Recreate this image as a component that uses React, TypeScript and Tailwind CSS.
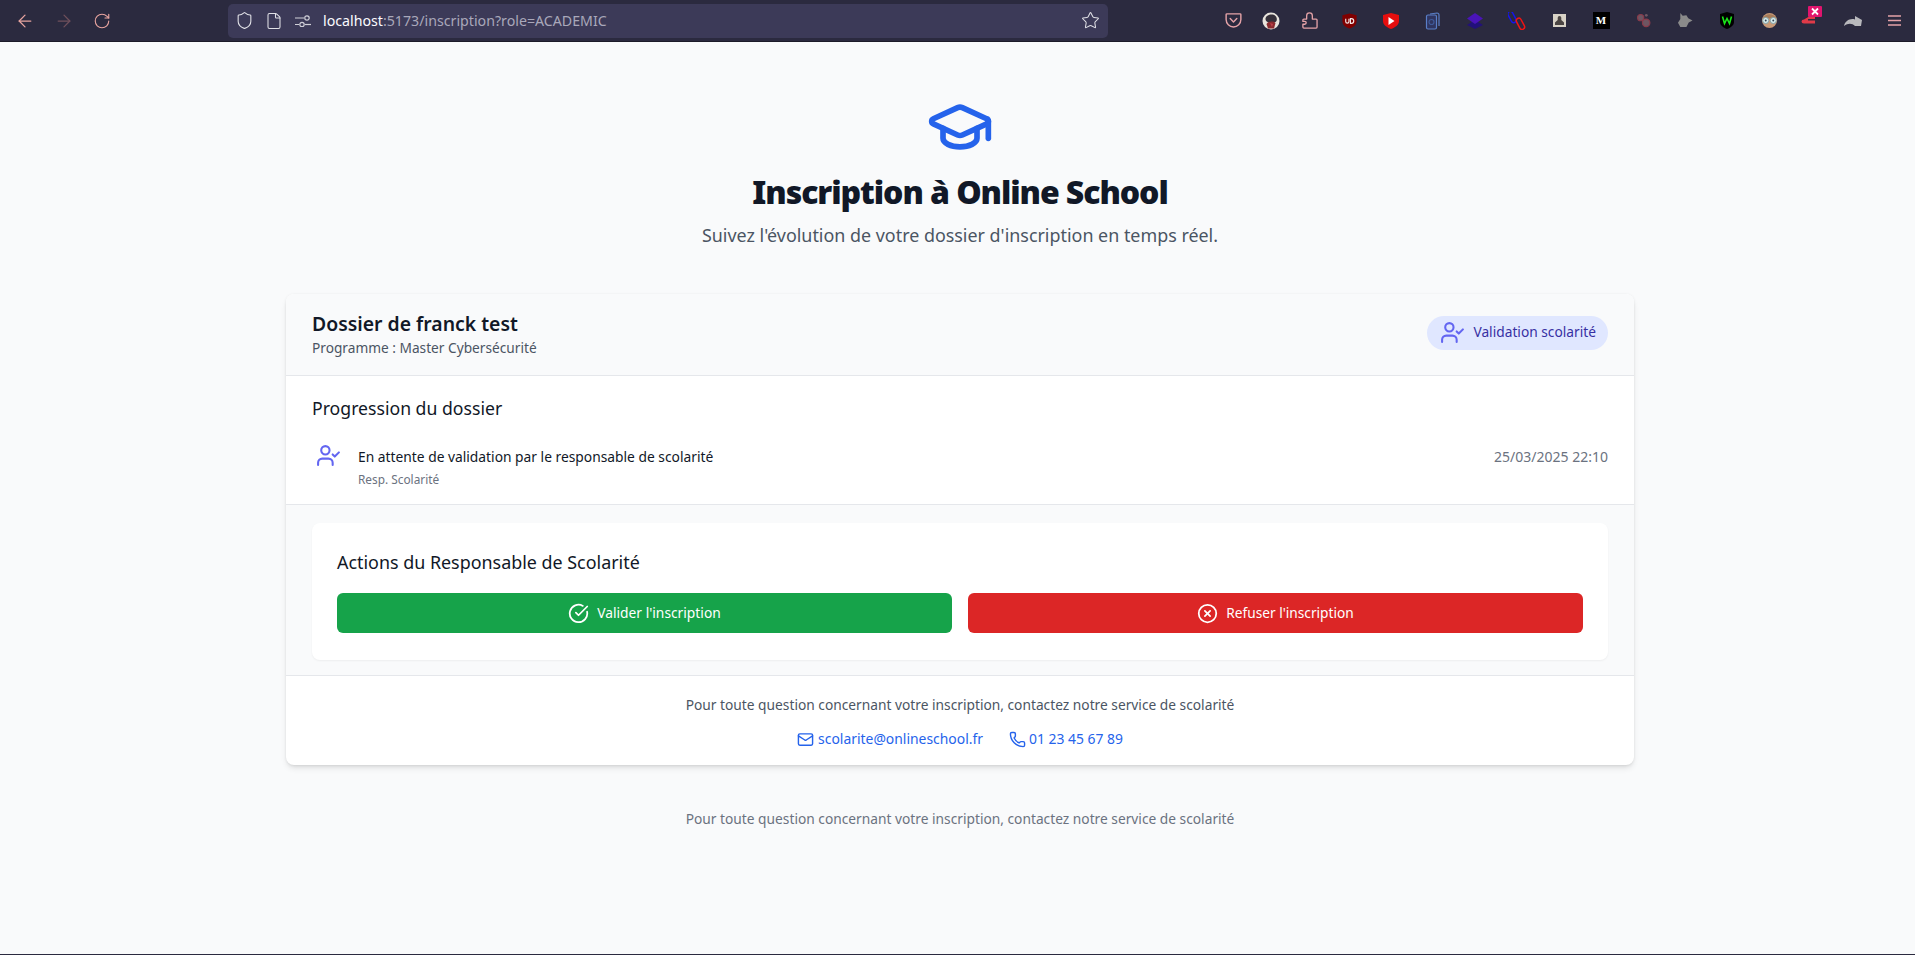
import React from "react";
import { ArrowLeft, ArrowRight, RotateCw, Shield, File, Star, GraduationCap, UserCheck, CircleCheckBig, CircleX, Mail, Phone } from "lucide-react";

const Slot = ({ children }: { children: React.ReactNode }) => (
  <div className="w-[42px] h-full flex items-center justify-center shrink-0">{children}</div>
);
const NarrowSlot = ({ children }: { children: React.ReactNode }) => (
  <div className="w-[38px] h-full flex items-center justify-center shrink-0">{children}</div>
);

const Extensions = () => (
  <div className="flex items-center h-full">
    <NarrowSlot>
      <svg width="17" height="17" viewBox="0 0 18 18" fill="none" stroke="#e5a3a8" strokeWidth="1.5" strokeLinecap="round" strokeLinejoin="round">
        <path d="M2 2h14a.8.8 0 0 1 .8.8V8a7.8 7.8 0 0 1-15.600 0V2.800A.8.8 0 0 1 2 2z" />
        <path d="M5.500 7l3.500 3.500L12.500 7" />
      </svg>
    </NarrowSlot>
    <NarrowSlot>
      <svg width="18" height="18" viewBox="0 0 18 18">
        <circle cx="9" cy="9" r="8.500" fill="#e8e4dc" />
        <path d="M3.500 7c0-4 7-6 10-3 2 2 1.500 5 0 6-2 1-7 1-8 0-1-.5-2-1.500-2-3z" fill="#35303a" />
        <path d="M4.500 12c2-3 7-3 9-1l-1.500 5.500-6 0z" fill="#8a2a2e" />
        <path d="M8 11l3 1-1 3z" fill="#c0404a" />
      </svg>
    </NarrowSlot>
    <NarrowSlot>
      <svg width="17" height="17" viewBox="0 0 18 18" fill="none" stroke="#e5a3a8" strokeWidth="1.400" strokeLinejoin="round">
        <path d="M6 7.500V4a3 3 0 0 1 6 0v3.500h4a1 1 0 0 1 1 1V16a1 1 0 0 1-1 1H3a1 1 0 0 1-1-1v-3h2a1.500 1.500 0 0 0 0-3H2V8.500a1 1 0 0 1 1-1z" />
      </svg>
    </NarrowSlot>
    <Slot>
      <svg width="17" height="18" viewBox="0 0 18 18">
        <path d="M9 1l7.500 2v6c0 4-3 6.500-7.500 8-4.500-1.500-7.500-4-7.500-8V3z" fill="#800000" />
        <path d="M5 6.500v3a1.700 1.700 0 0 0 3.400 0v-3M10 6.500v5h1a2.500 2.500 0 0 0 0-5z" fill="none" stroke="#f2e6e6" strokeWidth="1.200" />
      </svg>
    </Slot>
    <Slot>
      <svg width="18" height="18" viewBox="0 0 18 18">
        <path d="M9 1l8 2v6c0 4-4 6.500-8 8-4-1.500-8-4-8-8V3z" fill="#e50e0e" />
        <path d="M6.500 5l6 4-6 4z" fill="#fff" />
      </svg>
    </Slot>
    <Slot>
      <svg width="16" height="18" viewBox="0 0 16 18" fill="none" stroke="#5a7fc8" strokeWidth="1.200">
        <path d="M5 2l7-1a2 2 0 0 1 2 2v11" />
        <rect x="1.500" y="3" width="10" height="14" rx="1.500" fill="#2f3560" />
        <circle cx="6.500" cy="10" r="2.500" stroke="#3f5a99" />
      </svg>
    </Slot>
    <Slot>
      <svg width="18" height="16" viewBox="0 0 18 16">
        <path d="M9 7l8 5-8 4-8-4z" fill="#22107a" />
        <path d="M9 0l8 5.500-8 5.500-8-5.500z" fill="#4a14b8" />
      </svg>
    </Slot>
    <Slot>
      <svg width="18" height="18" viewBox="0 0 18 18" fill="none" strokeWidth="1.500">
        <rect x="1.500" y="-1" width="5" height="12" rx="2.500" transform="rotate(-28 4 5)" stroke="#1414f0" />
        <rect x="10" y="6" width="5" height="12" rx="2.500" transform="rotate(-28 12 12)" stroke="#f01414" />
      </svg>
    </Slot>
    <Slot>
      <svg width="13" height="13" viewBox="0 0 13 13">
        <rect width="13" height="13" fill="#d8d2c6" />
        <path d="M6.500 2a1.800 1.800 0 0 1 1.800 1.800V6l2.700 2.500V11H2V8.500L4.700 6V3.800A1.800 1.800 0 0 1 6.500 2z" fill="#4a4442" />
      </svg>
    </Slot>
    <Slot>
      <div className="w-[17px] h-[17px] bg-black text-white flex items-center justify-center text-[11px] font-bold [font-family:'Liberation_Serif',serif]">M</div>
    </Slot>
    <Slot>
      <svg width="17" height="17" viewBox="0 0 18 18" fill="#6e5562" stroke="#8a3a4a" strokeWidth="1.200">
        <circle cx="6" cy="6" r="3.300" />
        <circle cx="11.800" cy="11.500" r="4" />
        <circle cx="12" cy="3.500" r="1.500" stroke="none" />
      </svg>
    </Slot>
    <Slot>
      <svg width="16" height="15" viewBox="0 0 17 16">
        <path d="M3.500 0L6 3l4-.5 2 3 4.500 2.500-4 2L10 15H3.500L1 10.500 3.500 6.500z" fill="#8a8a8a" />
      </svg>
    </Slot>
    <Slot>
      <svg width="14" height="17" viewBox="0 0 14 17">
        <path d="M7 0l7 2v8c0 3-3 5.500-7 7-4-1.500-7-4-7-7V2z" fill="#000" />
        <path d="M2.500 4.500l2 7 2.500-5 2.500 5 2-7" fill="none" stroke="#19e619" strokeWidth="1.600" />
      </svg>
    </Slot>
    <Slot>
      <svg width="17" height="17" viewBox="0 0 18 18">
        <circle cx="9" cy="9" r="8" fill="#c89a78" />
        <path d="M2 7c2-6 12-6 14 0z" fill="#a57c5a" />
        <circle cx="5" cy="9" r="3.200" fill="#d8ecec" stroke="#7fa0a8" />
        <circle cx="13" cy="9" r="3.200" fill="#d8ecec" stroke="#7fa0a8" />
        <circle cx="5" cy="9" r="1" fill="#345" />
        <circle cx="13" cy="9" r="1" fill="#345" />
      </svg>
    </Slot>
    <Slot>
      <svg width="21" height="20" viewBox="0 0 21 20" className="-mt-[10px]">
        <path d="M3 13.500l6-3.500h5v3H7v1.500h7v3H3q-2.500 0-2.500-2t2.500-2z" fill="#e03a48" />
        <rect x="7" y="0" width="14" height="11" rx="1" fill="#e0146e" />
        <path d="M11 2.500l6 6M17 2.500l-6 6" stroke="#fff" strokeWidth="1.800" />
      </svg>
    </Slot>
    <Slot>
      <svg width="18" height="10" viewBox="0 0 18 10">
        <path d="M0 10C1 5 6 2 11 3.500V0l7 4-1 6H11C8 7 4 7 0 10z" fill="#b8b8bc" />
      </svg>
    </Slot>
    <div className="w-[41px] h-full flex items-center justify-center shrink-0">
      <svg width="13" height="11" viewBox="0 0 13 11" stroke="#e5a3a8" strokeWidth="1.500">
        <path d="M0 1h13M0 5.500h13M0 10h13" />
      </svg>
    </div>
  </div>
);

const Browser = () => (
  <div className="h-[42px] bg-[#2b2a3f] flex items-center shrink-0 border-b border-[#1c1b29]">
    <div className="w-[228px] flex items-center pl-[15px] gap-[19px] shrink-0">
      <ArrowLeft size={20} color="#e9a5a0" strokeWidth={1.500} />
      <ArrowRight size={20} color="#70505c" strokeWidth={1.500} />
      <RotateCw size={18} color="#e9a5a0" strokeWidth={1.500} />
    </div>
    <div className="w-[880px] h-[34px] bg-[#3c3a58] rounded-[5px] flex items-center pl-[7px] pr-[8px] shrink-0">
      <Shield size={19} color="#e0e0e6" strokeWidth={1.400} />
      <File size={18} color="#e0e0e6" strokeWidth={1.400} className="ml-[11px]" />
      <svg width="16" height="12" viewBox="0 0 16 12" fill="none" stroke="#d0d0d8" strokeWidth="1.200" className="ml-[12px]">
        <path d="M0 3h9M0 9.500h4" />
        <circle cx="12" cy="3" r="2.200" />
        <circle cx="7" cy="9.500" r="2.200" />
        <path d="M10 9.500h6" />
      </svg>
      <div className="ml-[12px] text-[14.2px] whitespace-nowrap text-[#a9a8ba] [font-family:'Noto_Sans',sans-serif]">
        <span className="text-[#fbfbfe]">localhost</span>:5173/inscription?role=ACADEMIC
      </div>
      <Star size={19} color="#e0e0e6" strokeWidth={1.300} className="ml-auto" />
    </div>
    <div className="ml-auto h-full"><Extensions /></div>
  </div>
);

export default function App() {
  return (
    <div className="h-[955px] w-[1915px] overflow-hidden flex flex-col bg-[#f9fafb] border-b border-[#2b2a3f] [font-family:'Noto_Sans',sans-serif] text-[#111827]">
      <Browser />
      <main className="w-[1348px] ml-[286px] pt-[51px]">
        <header className="flex flex-col items-center">
          <GraduationCap size={68} color="#2563eb" strokeWidth={2} />
          <h1 className="mt-[13px] text-[32px] leading-[36px] font-black tracking-[-1.07px] text-[#111827]">Inscription à Online School</h1>
          <p className="mt-[11px] text-[17.9px] leading-[28px] text-[#4b5563]">Suivez l'évolution de votre dossier d'inscription en temps réel.</p>
        </header>

        <section className="mt-[45px] bg-white rounded-lg shadow-[0_4px_6px_-1px_rgba(0,0,0,0.1),0_2px_4px_-2px_rgba(0,0,0,0.1),0_0_3px_rgba(0,0,0,0.05)] overflow-hidden">
          <div className="bg-[#f9fafb] px-[26px] pt-[16px] pb-[17px] border-b border-[#e5e7eb] flex items-center justify-between">
            <div>
              <h2 className="text-[19.4px] leading-[28px] font-semibold">Dossier de franck test</h2>
              <p className="text-[13.7px] leading-[20px] text-[#4b5563]">Programme : Master Cybersécurité</p>
            </div>
            <div className="flex items-center gap-[8px] h-[34px] mb-[3px] rounded-full bg-[#e0e7ff] pl-[13px] pr-[12px] text-[13.75px] text-[#3730a3]">
              <UserCheck size={25} color="#6366f1" strokeWidth={2} />
              <span>Validation scolarité</span>
            </div>
          </div>

          <div className="px-[26px] pt-[18px] pb-[17px] border-b border-[#e5e7eb]">
            <h3 className="text-[17.65px] leading-[28px] font-normal">Progression du dossier</h3>
            <div className="mt-[25px] flex items-start">
              <UserCheck size={25} color="#6366f1" strokeWidth={2} className="ml-[4px] -mt-[4px] shrink-0" />
              <div className="ml-[17px]">
                <p className="text-[13.8px] leading-[20px] text-[#111827]">En attente de validation par le responsable de scolarité</p>
                <p className="mt-[4px] text-[11.85px] leading-[16px] text-[#6b7280]">Resp. Scolarité</p>
              </div>
              <span className="ml-auto text-[14px] leading-[20px] text-[#6b7280]">25/03/2025 22:10</span>
            </div>
          </div>

          <div className="bg-[#f9fafb] px-[26px] pt-[18px] pb-[15px] border-b border-[#e5e7eb]">
            <div className="bg-white rounded-lg shadow-[0_1px_2px_rgba(0,0,0,0.05)] px-[25px] pt-[25px] pb-[27px]">
              <h3 className="text-[17.9px] leading-[28px] font-normal">Actions du Responsable de Scolarité</h3>
              <div className="mt-[17px] grid grid-cols-2 gap-[16px]">
                <button className="h-[40px] rounded-md bg-[#16a34a] text-white text-[13.8px] flex items-center justify-center gap-[8px]">
                  <CircleCheckBig size={21} strokeWidth={2} />Valider l'inscription
                </button>
                <button className="h-[40px] rounded-md bg-[#dc2626] text-white text-[13.7px] flex items-center justify-center gap-[8px]">
                  <CircleX size={21} strokeWidth={2} />Refuser l'inscription
                </button>
              </div>
            </div>
          </div>

          <div className="pt-[19px] pb-[16px] flex flex-col items-center">
            <p className="text-[13.75px] leading-[20px] text-[#4b5563]">Pour toute question concernant votre inscription, contactez notre service de scolarité</p>
            <div className="mt-[14px] flex items-center gap-[26px] text-[13.9px] leading-[20px] text-[#2563eb]">
              <span className="flex items-center gap-[4px]"><Mail size={17} strokeWidth={2} />scolarite@onlineschool.fr</span>
              <span className="flex items-center gap-[3px]"><Phone size={17} strokeWidth={2} />01 23 45 67 89</span>
            </div>
          </div>
        </section>

        <p className="mt-[44px] text-center text-[13.75px] leading-[20px] text-[#6b7280]">Pour toute question concernant votre inscription, contactez notre service de scolarité</p>
      </main>
    </div>
  );
}
